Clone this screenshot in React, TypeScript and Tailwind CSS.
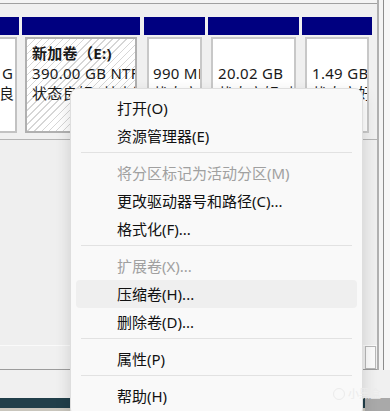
import React from "react";

const cellText = "text-[15px] leading-[20px] text-[#1a1a1a] whitespace-nowrap overflow-hidden tracking-[0.3px]";

function Header() {
  return <div className="h-[18px] bg-[#000080]" />;
}

const menuItems: { label?: string; disabled?: boolean; active?: boolean; sep?: boolean }[] = [
  { label: "打开(O)" },
  { label: "资源管理器(E)" },
  { sep: true },
  { label: "将分区标记为活动分区(M)", disabled: true },
  { label: "更改驱动器号和路径(C)..." },
  { label: "格式化(F)..." },
  { sep: true },
  { label: "扩展卷(X)...", disabled: true },
  { label: "压缩卷(H)...", active: true },
  { label: "删除卷(D)..." },
  { sep: true },
  { label: "属性(P)" },
  { sep: true },
  { label: "帮助(H)" },
];

export default function App() {
  return (
    <div className="relative w-[390px] h-[411px] overflow-hidden bg-[#f0f0f0] flex flex-col font-['Noto_Sans','Noto_Sans_CJK_SC',sans-serif]">
      {/* Disk management background */}
      <div className="h-[370px] flex">
        <div className="w-[377px] flex flex-col">
          <div className="h-[3px] bg-[#f4f4f4]" />
          <div className="h-[1px] bg-[#a0a0a0]" />
          <div className="h-[13px]" />

          {/* Partition row */}
          <div className="flex h-[116px]">
            {/* partial column */}
            <div className="w-[19px] flex flex-col">
              <Header />
              <div className="pr-[2px] pt-[2px]">
                <div className={`h-[96px] border-y-2 border-r-2 border-[#c2c2c2] bg-white pt-[4px] ${cellText}`}>
                  <div>&nbsp;</div>
                  <div className="pl-[2px]">G</div>
                  <div className="-ml-[1px]">良</div>
                </div>
              </div>
            </div>
            <div className="w-[3px]" />

            {/* selected volume */}
            <div className="w-[118px] flex flex-col">
              <Header />
              <div className="px-[3px] pt-[2px]">
                <div className={`h-[96px] border-2 border-[#b0b0b0] bg-[repeating-linear-gradient(135deg,#d6d6d6_0px,#d6d6d6_1px,#ffffff_1px,#ffffff_5px)] pl-[5px] pt-[4px] ${cellText}`}>
                  <div className="font-bold">新加卷（E:)</div>
                  <div>390.00 GB NTFS</div>
                  <div>状态良好 (基本数据分区)</div>
                </div>
              </div>
            </div>
            <div className="w-[4px]" />

            <div className="w-[61px] flex flex-col">
              <Header />
              <div className="px-[3px] pt-[2px]">
                <div className={`h-[96px] border-2 border-[#c8c8c8] bg-white pl-[4px] pt-[4px] ${cellText}`}>
                  <div>&nbsp;</div>
                  <div>990 MB</div>
                  <div>状态良好 (恢复分区)</div>
                </div>
              </div>
            </div>
            <div className="w-[3px]" />

            <div className="w-[91px] flex flex-col">
              <Header />
              <div className="px-[3px] pt-[2px]">
                <div className={`h-[96px] border-2 border-[#c8c8c8] bg-white pl-[5px] pt-[4px] ${cellText}`}>
                  <div>&nbsp;</div>
                  <div>20.02 GB</div>
                  <div>状态良好 (恢复分区)</div>
                </div>
              </div>
            </div>
            <div className="w-[3px]" />

            <div className="w-[70px] flex flex-col">
              <Header />
              <div className="px-[3px] pt-[2px]">
                <div className={`h-[96px] border-2 border-[#c8c8c8] bg-white pl-[5px] pt-[4px] ${cellText}`}>
                  <div>&nbsp;</div>
                  <div>1.49 GB</div>
                  <div>状态良好 (恢复分区)</div>
                </div>
              </div>
            </div>
          </div>

          <div className="h-[6px]" />
          <div className="h-[1px] bg-[#b4b4b4]" />
          <div className="flex-1 bg-[#efefef]" />
          <div className="h-[1px] bg-[#fafafa]" />
          <div className="h-[23px] flex">
            <div className="flex-1" />
            <div className="w-[11px] border border-[#b8b8b8] bg-[#fbfbfb] mr-[1px]" />
          </div>
          <div className="h-[1px] bg-[#9c9c9c]" />
        </div>
        <div className="w-[2px] bg-[#b0b0b0]" />
        <div className="w-[4px] bg-[#f4f4f4]" />
        <div className="w-[1px] bg-[#8c8c8c]" />
        <div className="flex-1 bg-[#f7f7f7]" />
      </div>

      <div className="h-[28px] bg-[#f0f0f0]" />
      <div className="flex-1 flex">
        <div className="flex-1 flex flex-col">
          <div className="flex-1 bg-[#213f4a]" />
          <div className="h-[3px] bg-[#c9c6bd]" />
        </div>
        <div className="w-[25px] bg-[#a9a9a9]" />
      </div>

      {/* Context menu */}
      <div className="absolute left-[70px] top-[88px] w-[293px] rounded-[8px] border border-[#dedede] bg-[#f9f9f9] px-[5px] pt-[5px] pb-[6px] shadow-[0_6px_16px_rgba(0,0,0,0.14)]">
        {menuItems.map((it, i) =>
          it.sep ? (
            <div key={i} className="pt-[2px] pb-[6px] px-[5px]">
              <div className="h-[1px] bg-[#e2e2e2]" />
            </div>
          ) : (
            <div
              key={i}
              className={`h-[28px] flex items-center pl-[41px] rounded-[4px] text-[15px] ${
                it.active ? "bg-[#efefef]" : ""
              } ${it.disabled ? "text-[#a0a0a0]" : "text-[#111111]"}`}
            >
              {it.label}
            </div>
          )
        )}
      </div>

      {/* watermark */}
      <div className="absolute left-[333px] top-[386px] flex items-center gap-[3px] text-[11px] text-[#ebebeb]">
        <span className="w-[12px] h-[12px] rounded-full border border-[#ebebeb]" />
        <span>小黑盒</span>
      </div>
    </div>
  );
}
